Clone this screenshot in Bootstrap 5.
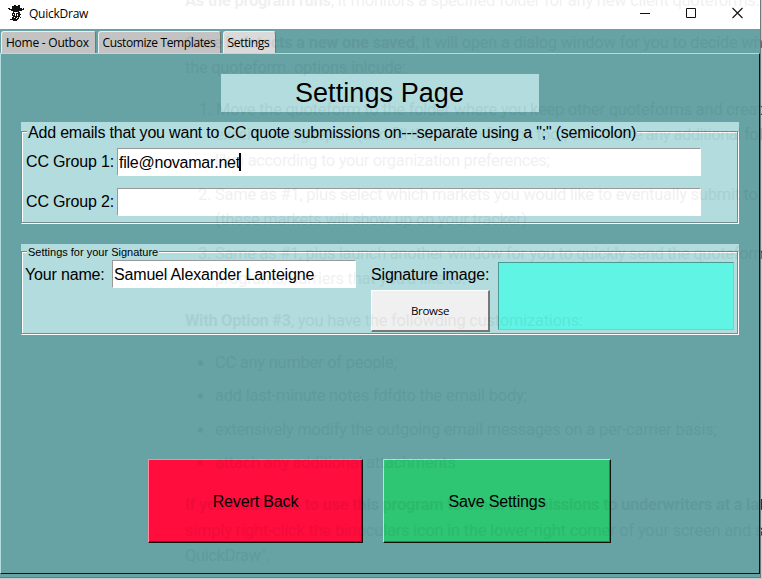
<!DOCTYPE html>
<html lang="en">
<head>
<meta charset="utf-8">
<meta name="viewport" content="width=device-width, initial-scale=1">
<title>QuickDraw</title>
<link rel="stylesheet" href="https://cdn.jsdelivr.net/npm/bootstrap@5.3.0/dist/css/bootstrap.min.css">
<style>
:root{--teal:#67a3a5;--pale:#b2dcde;--groove:#758d8e}
body{width:762px;height:579px;background:#c8c8c8;color:#000;font-family:"Liberation Sans",Arial,sans-serif;font-size:16px;line-height:18px;letter-spacing:-.17px}
.win{width:761px;height:578px;border-right:1px solid #777;border-bottom:1px solid #777;background:var(--teal)}
.ui-font{font-family:"Open Sans","Noto Sans",sans-serif;font-size:12px;line-height:16px}
.titlebar{height:29px;padding:5px 17px 0 8px}
.title-name{margin-left:5px;padding-top:1px;letter-spacing:-.25px}
.controls{gap:36px;padding-top:2px}
.tabs{height:24px;padding-left:1px;gap:2px;padding-top:2px}
.tab{height:22px;background:#c3c3c3;border:1px solid #eee;border-right-color:#777;border-bottom:0;border-radius:3px 3px 0 0;padding:3px 0 0 4px;letter-spacing:-.24px;white-space:nowrap}
.tab-a{width:95px}.tab-b{width:123px;letter-spacing:-.38px}.tab-c{width:53px;background:#dadada;height:23px;letter-spacing:-.32px}
.tab-b,.tab-c{padding-left:3.500px}
.page{height:521px;width:760px;border:1px solid var(--pale);border-right-color:#111;border-bottom-color:#111;padding:20px 20px 0}
.heading{width:318px;height:38px;margin-left:200px;background:var(--pale);font-size:27px;line-height:39px;font-weight:400;letter-spacing:.08px;padding-right:1px}
.group{background:var(--pale);width:718px;position:relative}
.group::before{content:"";position:absolute;left:0;right:1px;bottom:1px;top:9px;border:1px solid var(--groove);box-shadow:1px 1px 0 #fff,inset 1px 1px 0 #fff}
.group>*{position:relative}
.g-one{height:102px;margin-top:10px}
.g-two{height:91px;margin-top:20px}
.g-two::before{top:7px}
.caption{background:var(--pale);margin-left:6px;width:max-content;padding:0 1px;white-space:nowrap}
.g-one .caption{height:20px;line-height:21px;letter-spacing:-.195px}
.g-two .caption{font-size:11px;height:16px;line-height:17px;letter-spacing:0}
.row-one{padding:6px 0 0 5px}
.row-two{padding:12px 0 0 5px}
.entry{background:#fff;height:28px;border:1px solid #fff;border-top-color:#999;border-left-color:#999;padding:0 1px;line-height:27px;white-space:nowrap}
.entry-wide{width:584px;letter-spacing:-.24px}
.entry-name{width:244px}
.lbl{white-space:nowrap;line-height:28px}
.lbl-cc{width:91px}
.lbl-name{width:87px;line-height:30px;height:28px}
.sig-col{margin-left:15px;width:127px;gap:2px}
.sig-col .lbl{line-height:30px;height:28px}
.caret{width:2px;height:18px;background:#000;margin-left:-1px}
.browse{width:119px;height:42px;background:#f0f0f0;border:1px solid #fff;border-right:2px solid #777;border-bottom:2px solid #777;font-size:11.5px;letter-spacing:-.3px}
.sig{width:236px;height:68px;margin-top:2px;background:#60f4e4;border:1px solid #4a9b93;border-right-color:#55dfcf;border-bottom-color:#55dfcf}
.actions{padding:124px 0 0 127px;gap:20px}
.big.btn{height:84px;border:1px solid;border-radius:0;color:#000;font-size:16px;padding:2px 0 0;letter-spacing:-.13px}
.btn.revert{width:215px;background:#ff0d3d;border-color:#ff8d9f #111 #111 #ff8d9f;box-shadow:inset -1px -1px 0 #9c0d2d}
.btn.save{width:228px;background:#2ec573;border-color:#9bf5c4 #111 #111 #9bf5c4;box-shadow:inset -1px -1px 0 #23834f}
.behind{pointer-events:none;font-family:Roboto,sans-serif;font-size:16.5px;letter-spacing:0}
.behind .bd{font-weight:700}
</style>
<script src="https://cdn.jsdelivr.net/npm/bootstrap@5.3.0/dist/js/bootstrap.bundle.min.js"></script>
</head>
<body class="m-0 overflow-hidden position-relative">
<main class="win d-flex flex-column">
  <header class="titlebar d-flex bg-white ui-font">
    <svg width="16" height="16" viewBox="0 0 16 16" fill="#111" shape-rendering="crispEdges"><path d="M4 1h2V0h2v1h2V0h2v3h2v1h1V3h1v2h-2v1h-3v1h1v2h1v1h-1v2h-1v2h-1v1H9v1H5v-1H4v-3h1v-1H4V8h1V6H3V5H1V4H0V3h2v1h2z"/><path fill="#fff" d="M6 7h4v1H6zM5 9h1v1H5zM7 8h1v3H7zM9 9h1v2H9zM6 12h1v1H6zM8 13h1v1H8zM9 12h1v1H9z"/><path d="M2 14h2v1H2zM12 12h1v1h-1z"/></svg>
    <span class="title-name">QuickDraw</span>
    <div class="controls d-flex ms-auto"><svg width="10" height="12" stroke="#111"><path d="M0 6.500h10"/></svg><svg width="10" height="12" stroke="#111" fill="none"><path d="M.5 1.500h9v9h-9z"/></svg><svg width="11" height="12" stroke="#111" stroke-width="1.100"><path d="M.5 1l10 10M10.500 1l-10 10"/></svg></div>
  </header>
  <nav class="tabs d-flex ui-font"><div class="tab tab-a">Home - Outbox</div><div class="tab tab-b">Customize Templates</div><div class="tab tab-c">Settings</div></nav>
  <section class="page">
    <h1 class="heading text-center mb-0">Settings Page</h1>
    <div class="group g-one">
      <div class="caption">Add emails that you want to CC quote submissions on---separate using a ";" (semicolon)</div>
      <div class="d-flex row-one"><span class="lbl lbl-cc">CC Group 1:</span><div class="entry entry-wide d-flex align-items-center"><span>file@novamar.net</span><i class="caret"></i></div></div>
      <div class="d-flex row-two"><span class="lbl lbl-cc">CC Group 2:</span><div class="entry entry-wide"></div></div>
    </div>
    <div class="group g-two">
      <div class="caption">Settings for your Signature</div>
      <div class="d-flex align-items-start ps-1">
        <span class="lbl lbl-name">Your name:</span><div class="entry entry-name">Samuel Alexander Lanteigne</div>
        <div class="d-flex flex-column sig-col"><span class="lbl">Signature image:</span><button class="browse ui-font p-0">Browse</button></div>
        <div class="sig"></div>
      </div>
    </div>
    <div class="d-flex actions"><button class="btn big revert">Revert Back</button><button class="btn big save">Save Settings</button></div>
  </section>
</main>
<svg class="behind position-absolute top-0 start-0" width="762" height="579" viewBox="0 0 762 579">
  <defs><clipPath id="edge"><path d="M761 29h1v550h-1z"/></clipPath>
  <g id="doc">
    <text y="6"><tspan class="bd" x="185" textLength="146">As the program runs</tspan><tspan x="331" textLength="429">, it monitors a specified folder for any new client quoteforms.</tspan></text>
    <text y="48"><tspan class="bd" x="185" textLength="230">Once it detects a new one saved</tspan><tspan x="415" textLength="356">, it will open a dialog window for you to decide whe</tspan></text>
    <text x="185" y="73" textLength="221">the quoteform. options inlcude:</text>
    <text x="199" y="115">1.</text><text x="216" y="115" textLength="555">Move the quoteform to the folder where you keep other quoteforms and create</text>
    <text x="215" y="140" textLength="556">excel tracking report (and fill that info in for you too), and create any additional fold</text>
    <text x="215" y="166" textLength="335">like) according to your organization preferences;</text>
    <text x="198" y="200">2.</text><text x="215" y="200" textLength="543">Same as #1, plus select which markets you would like to eventually submit to</text>
    <text x="215" y="225" textLength="312">(these markets will show up on your tracker)</text>
    <text x="198" y="259">3.</text><text x="215" y="259" textLength="553">Same as #1, plus launch another window for you to quickly send the quoteform</text>
    <text x="215" y="284" textLength="251">programs/carriers that you'd like to.</text>
    <text y="326"><tspan class="bd" x="185" textLength="106">With Option #3</tspan><tspan x="291" textLength="292">, you have the followding customizations:</tspan></text>
    <circle cx="200.500" cy="363" r="2.700"/><text x="215" y="368" textLength="182">CC any number of people;</text>
    <circle cx="200.500" cy="396" r="2.700"/><text x="215" y="401" textLength="312">add last-minute notes fdfdto the email body;</text>
    <circle cx="200.500" cy="430" r="2.700"/><text x="215" y="435" textLength="502">extensively modify the outgoing email messages on a per-carrier basis;</text>
    <circle cx="200.500" cy="463" r="2.700"/><text x="215" y="468" textLength="241">attach any additional attachments</text>
    <text class="bd" x="185" y="510" textLength="588">If you would like to use this program to email submissions to underwriters at a late</text>
    <text x="185" y="536" textLength="587">simply right-click the binoculars icon in the lower-right corner of your screen and se</text>
    <text x="185" y="561" textLength="85">QuickDraw".</text>
  </g></defs>
  <use href="#doc" opacity=".055"/>
  <use href="#doc" clip-path="url(#edge)" opacity=".75"/>
</svg>
</body>
</html>
